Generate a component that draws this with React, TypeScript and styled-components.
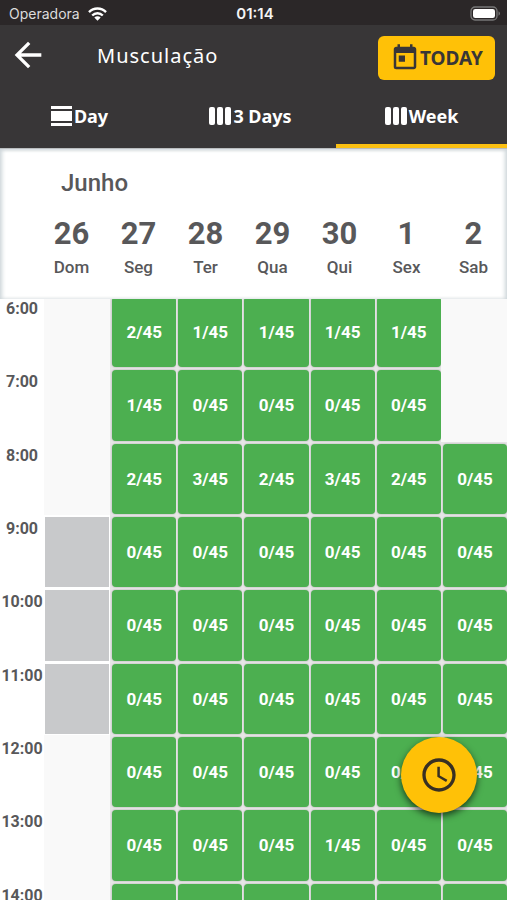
import React, { useState } from 'react';
import styled, { createGlobalStyle } from 'styled-components';
import { MdAccessTime, MdArrowBack, MdToday } from 'react-icons/md';

const GlobalStyle = createGlobalStyle`
  * { box-sizing: border-box; }
  body { margin: 0; background: #fff; }
  button { font: inherit; border: 0; padding: 0; background: none; color: inherit; cursor: pointer; }
`;

const Screen = styled.div`
  display: flex;
  flex-direction: column;
  height: 100vh;
  overflow: hidden;
  font-family: Roboto, sans-serif;
  color: #58585a;
`;

const StatusBar = styled.div`
  display: grid;
  grid-template-columns: 1fr auto 1fr;
  align-items: center;
  height: 25px;
  padding: 2px 6px 0 9px;
  background: #2b2728;
  color: #f4f4f4;
  font: 400 14px/20px Inter, sans-serif;
`;

const Carrier = styled.div`
  display: flex;
  align-items: center;
  gap: 8px;
  color: #dcdcdc;
`;

const Clock = styled.time`
  font-size: 15px;
  font-weight: 600;
`;

const Battery = styled.svg`
  justify-self: end;
`;

const Header = styled.header`
  flex: none;
  background: #383637;
  color: #fff;
  font-family: "Noto Sans", sans-serif;
`;

const AppBar = styled.div`
  display: flex;
  align-items: center;
  height: 66px;
  padding: 0 12px 0 8px;
`;

const BackButton = styled.button`
  display: flex;
  margin-bottom: 6px;
`;

const Title = styled.h1`
  flex: 1;
  margin: 0 0 4px 49px;
  font-size: 20px;
  line-height: 28px;
  font-weight: 400;
  letter-spacing: 1px;
`;

const TodayButton = styled.button`
  && {
    display: flex;
    align-items: center;
    justify-content: center;
    height: 44px;
    padding: 0 12px;
    border-radius: 6px;
    background: #ffc107;
    color: #383637;
    font-size: 19px;
    font-weight: 700;
  }
`;

const Tabs = styled.div`
  display: grid;
  grid-template-columns: repeat(3, 1fr);
  margin-left: -6px;
`;

const Tab = styled.button<{ $active: boolean }>`
  && {
    display: flex;
    align-items: center;
    justify-content: center;
    gap: 2px;
    height: 57px;
    padding-bottom: 4px;
    border-bottom: 4px solid ${(p) => (p.$active ? '#fbc012' : 'transparent')};
    font-size: 18px;
    font-weight: 700;
  }
`;

const Dates = styled.section`
  flex: none;
  padding: 20px 0 20px 38px;
  border-top: 1px solid #b9bdbf;
  box-shadow: inset 3px 0 4px -1px #cdd5d9, inset -3px 0 4px -1px #cdd5d9, inset 0 3px 3px -1px #e3e7e9;
`;

const Month = styled.h2`
  margin: 0 0 21px 23px;
  font-size: 24px;
  line-height: 28px;
  font-weight: 500;
`;

const Days = styled.div`
  display: grid;
  grid-template-columns: repeat(7, 1fr);
`;

const DayHead = styled.div`
  display: flex;
  flex-direction: column;
  align-items: center;
  gap: 5px;
`;

const DayNumber = styled.span`
  font-size: 31px;
  line-height: 32px;
  font-weight: 700;
`;

const DayName = styled.span`
  font-size: 17px;
  line-height: 24px;
  font-weight: 500;
`;

const ScheduleArea = styled.main`
  flex: 1;
  min-height: 0;
  overflow-y: auto;
  scrollbar-width: none;
`;

const Schedule = styled.table`
  display: block;
  margin-top: -4px;
`;

const Hours = styled.tbody`
  display: grid;
  grid-template-rows: repeat(9, 1fr);
  height: 660px;
`;

const HourRow = styled.tr`
  display: grid;
  grid-template-columns: 44px repeat(7, 1fr);
`;

const HourLabel = styled.th`
  padding: 4px 0 0;
  font-size: 16px;
  line-height: 20px;
  font-weight: 700;
  text-align: center;
`;

type Kind = 'open' | 'closed' | 'empty';

const cellColour: Record<Kind, string> = { open: '#e6e6e6', closed: '#fff', empty: '#f9f9f9' };

const Cell = styled.td<{ $kind: Kind }>`
  display: flex;
  padding: ${(p) => (p.$kind === 'open' ? '2px 0 1px 2px' : '2px 1px 1px 1px')};
  background: ${(p) => cellColour[p.$kind]};
`;

const Slot = styled.button`
  && {
    flex: 1;
    border-radius: 4px;
    background: #4caf50;
    box-shadow: 0 0 2px rgba(0, 0, 0, 0.3);
    color: #fff;
    font-size: 17px;
    font-weight: 700;
  }
`;

const Closed = styled.div`
  flex: 1;
  background: #c8c9cb;
`;

const ClockButton = styled.button`
  && {
    position: fixed;
    right: 30px;
    bottom: 87px;
    display: grid;
    place-items: center;
    width: 76px;
    height: 76px;
    border-radius: 50%;
    background: #ffc107;
    color: #383023;
    box-shadow: 0 3px 7px rgba(0, 0, 0, 0.65);
  }
`;

const WifiIcon = () => (
  <svg width="19" height="14" viewBox="0 0 19 14" fill="none" stroke="#fff" strokeWidth="2.4" aria-hidden="true">
    <path d="M1 5.2C5.7.3 13.3.3 18 5.2" />
    <path d="M4.2 8.5c3-3 7.600-3 10.600 0" />
    <path d="M9.500 13.800 6.300 10.500c1.800-1.600 4.600-1.600 6.400 0z" fill="#fff" stroke="none" />
  </svg>
);

const DayIcon = () => (
  <svg width="21" height="20" viewBox="0 0 21 20" fill="#fff" aria-hidden="true">
    <path d="M0 0h21v3H0zM0 5h21v10H0zM0 17h21v3H0z" />
  </svg>
);

const ColumnsIcon = () => (
  <svg width="22" height="18" viewBox="0 0 22 18" fill="#fff" aria-hidden="true">
    <rect width="6" height="18" rx="2" />
    <rect x="8" width="6" height="18" rx="2" />
    <rect x="16" width="6" height="18" rx="2" />
  </svg>
);

const tabs = [
  { name: 'Day', icon: <DayIcon /> },
  { name: '3 Days', icon: <ColumnsIcon /> },
  { name: 'Week', icon: <ColumnsIcon /> },
];

const days = [
  ['26', 'Dom'],
  ['27', 'Seg'],
  ['28', 'Ter'],
  ['29', 'Qua'],
  ['30', 'Qui'],
  ['1', 'Sex'],
  ['2', 'Sab'],
];

// One mark per day: bookings taken, '-' for nothing scheduled, 'x' for closed.
const hours: [string, string][] = [
  ['6:00', '-21111-'],
  ['7:00', '-10000-'],
  ['8:00', '-232320'],
  ['9:00', 'x000000'],
  ['10:00', 'x000000'],
  ['11:00', 'x000000'],
  ['12:00', '-000000'],
  ['13:00', '-000100'],
  ['14:00', '-000000'],
];

const kindOf = (mark: string): Kind => (mark === '-' ? 'empty' : mark === 'x' ? 'closed' : 'open');

export default function App() {
  const [view, setView] = useState('Week');
  return (
    <Screen>
      <GlobalStyle />
      <StatusBar>
        <Carrier>
          Operadora
          <WifiIcon />
        </Carrier>
        <Clock>01:14</Clock>
        <Battery width="31" height="15" viewBox="0 0 31 15" aria-hidden="true">
          <rect x="1" y="1" width="26" height="13" rx="4" fill="none" stroke="#777" strokeWidth="1.300" />
          <rect x="3" y="3" width="22" height="9" rx="2.300" fill="#fff" />
          <path d="M28.500 5.300c2 1 2 3.400 0 4.400z" fill="#777" />
        </Battery>
      </StatusBar>
      <Header>
        <AppBar>
          <BackButton aria-label="Back">
            <MdArrowBack size={40} />
          </BackButton>
          <Title>Musculação</Title>
          <TodayButton>
            <MdToday size={30} />
            TODAY
          </TodayButton>
        </AppBar>
        <Tabs role="tablist">
          {tabs.map((tab) => (
            <Tab
              key={tab.name}
              role="tab"
              aria-selected={view === tab.name}
              $active={view === tab.name}
              onClick={() => setView(tab.name)}
            >
              {tab.icon}
              {tab.name}
            </Tab>
          ))}
        </Tabs>
      </Header>
      <Dates>
        <Month>Junho</Month>
        <Days>
          {days.map(([number, name]) => (
            <DayHead key={name}>
              <DayNumber>{number}</DayNumber>
              <DayName>{name}</DayName>
            </DayHead>
          ))}
        </Days>
      </Dates>
      <ScheduleArea>
        <Schedule>
          <Hours>
            {hours.map(([hour, marks]) => (
              <HourRow key={hour}>
                <HourLabel scope="row">{hour}</HourLabel>
                {marks.split('').map((mark, i) => {
                  const kind = kindOf(mark);
                  return (
                    <Cell key={days[i][1]} $kind={kind}>
                      {kind === 'open' && <Slot>{mark}/45</Slot>}
                      {kind === 'closed' && <Closed />}
                    </Cell>
                  );
                })}
              </HourRow>
            ))}
          </Hours>
        </Schedule>
      </ScheduleArea>
      <ClockButton aria-label="Choose time">
        <MdAccessTime size={40} />
      </ClockButton>
    </Screen>
  );
}
